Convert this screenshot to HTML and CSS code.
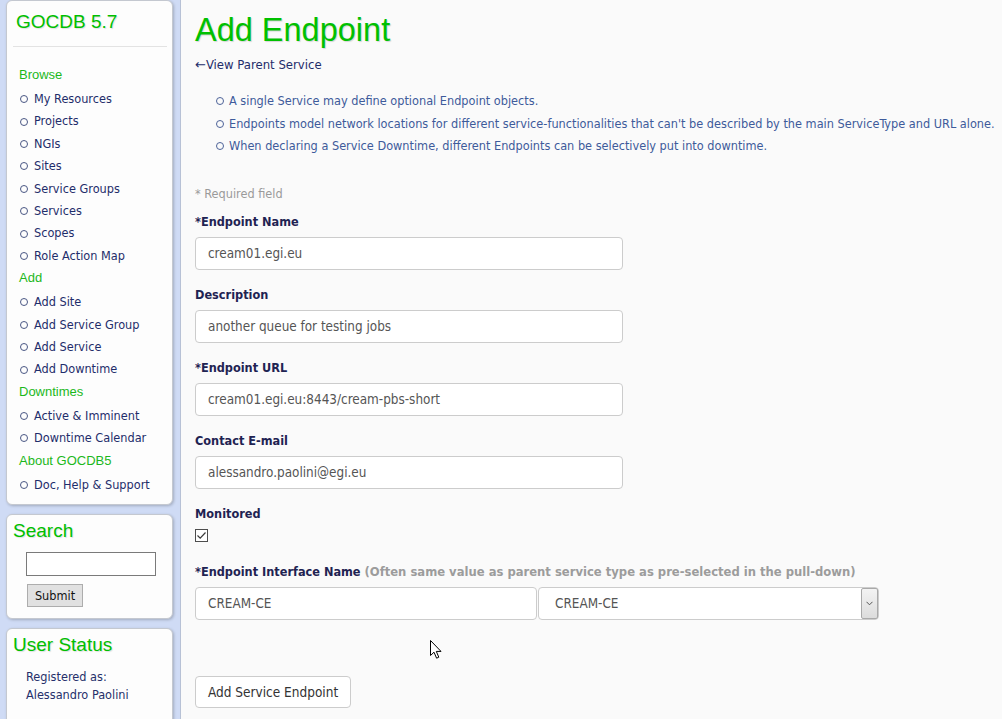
FILE: index.html
```html
<!DOCTYPE html>
<html lang="en">
<head>
<meta charset="utf-8">
<title>GOCDB - Add Endpoint</title>
<link rel="stylesheet" href="styles.css">
</head>
<body>
<div class="page">
  <aside class="sidebar">
    <nav class="box menu-box">
      <h2 class="brand">GOCDB 5.7</h2>
      <hr class="rule">
      <div class="menu-head first">Browse</div>
      <ul class="menu">
        <li><a href="#">My Resources</a></li>
        <li><a href="#">Projects</a></li>
        <li><a href="#">NGIs</a></li>
        <li><a href="#">Sites</a></li>
        <li><a href="#">Service Groups</a></li>
        <li><a href="#">Services</a></li>
        <li><a href="#">Scopes</a></li>
        <li><a href="#">Role Action Map</a></li>
      </ul>
      <div class="menu-head">Add</div>
      <ul class="menu">
        <li><a href="#">Add Site</a></li>
        <li><a href="#">Add Service Group</a></li>
        <li><a href="#">Add Service</a></li>
        <li><a href="#">Add Downtime</a></li>
      </ul>
      <div class="menu-head">Downtimes</div>
      <ul class="menu">
        <li><a href="#">Active &amp; Imminent</a></li>
        <li><a href="#">Downtime Calendar</a></li>
      </ul>
      <div class="menu-head">About GOCDB5</div>
      <ul class="menu">
        <li><a href="#">Doc, Help &amp; Support</a></li>
      </ul>
    </nav>
    <div class="box search-box">
      <h3 class="box-title">Search</h3>
      <form class="search-form">
        <input type="text" class="search-input">
        <button type="button" class="submit">Submit</button>
      </form>
    </div>
    <div class="box status-box">
      <h3 class="box-title">User Status</h3>
      <p class="status">Registered as:<br>Alessandro Paolini</p>
    </div>
  </aside>

  <main class="main">
    <h1 class="title">Add Endpoint</h1>
    <a class="back" href="#"><span class="arrow">&larr;</span>View Parent Service</a>
    <ul class="notes">
      <li>A single Service may define optional Endpoint objects.</li>
      <li>Endpoints model network locations for different service-functionalities that can't be described by the main ServiceType and URL alone.</li>
      <li>When declaring a Service Downtime, different Endpoints can be selectively put into downtime.</li>
    </ul>
    <div class="required">* Required field</div>
    <form class="form">
      <div class="field first">
        <label class="lbl">*Endpoint Name</label>
        <input class="text" type="text" value="cream01.egi.eu">
      </div>
      <div class="field">
        <label class="lbl">Description</label>
        <input class="text" type="text" value="another queue for testing jobs">
      </div>
      <div class="field">
        <label class="lbl">*Endpoint URL</label>
        <input class="text" type="text" value="cream01.egi.eu:8443/cream-pbs-short">
      </div>
      <div class="field">
        <label class="lbl">Contact E-mail</label>
        <input class="text" type="text" value="alessandro.paolini@egi.eu">
      </div>
      <div class="field">
        <label class="lbl">Monitored</label>
        <span class="checkbox"><svg width="11" height="11" viewBox="0 0 11 11"><path d="M1.5 5.5 L4.2 8.2 L9.5 2.5" fill="none" stroke="#3a3a3a" stroke-width="1.2"/></svg></span>
      </div>
      <div class="field iface">
        <label class="lbl">*Endpoint Interface Name <span class="hint">(Often same value as parent service type as pre-selected in the pull-down)</span></label>
        <div class="iface-row">
          <input class="text narrow" type="text" value="CREAM-CE">
          <div class="select">
            <span class="select-val">CREAM-CE</span>
            <span class="select-arrow"><svg width="7" height="5" viewBox="0 0 7 5"><path d="M0.5 0.8 L3.5 3.8 L6.5 0.8" fill="none" stroke="#555" stroke-width="1"/></svg></span>
          </div>
        </div>
      </div>
      <button type="button" class="add-btn">Add Service Endpoint</button>
    </form>
  </main>
</div>
<svg class="cursor" width="13" height="20" viewBox="0 0 13 20"><path d="M0.5 0.5 L0.5 15.5 L4 12.2 L6.6 18.2 L8.8 17.2 L6.3 11.4 L11 11.4 Z" fill="#fff" stroke="#000" stroke-width="1" stroke-linejoin="round"/></svg>
</body>
</html>
```

FILE: styles.css
```css
* { box-sizing: border-box; }
html, body { margin: 0; height: 100%; }
body {
  background: #cfdbf5;
  font-family: "DejaVu Sans Condensed", "DejaVu Sans", sans-serif;
  font-stretch: condensed;
  font-size: 12.6px;
  color: #1f2d6b;
  overflow: hidden;
}
a { color: inherit; text-decoration: none; }

.page { display: flex; align-items: stretch; min-height: 100vh; }

/* Sidebar */
.sidebar {
  width: 167px;
  margin-left: 6px;
  flex-shrink: 0;
  display: flex;
  flex-direction: column;
  gap: 9px;
}
.box {
  background: #fdfdfd;
  border: 1px solid #c4c8d0;
  border-radius: 6px;
  box-shadow: 1px 1px 3px rgba(0, 0, 0, 0.22);
}
.menu-box { padding: 10px 0 8px 0; }
.brand {
  margin: 0;
  padding-left: 9px;
  font: normal 19px/22px "Liberation Sans", Arial, sans-serif;
  color: #00bf00;
  text-shadow: 1px 1px 1px rgba(0, 0, 0, 0.12);
}
.rule {
  margin: 13px 5px 0 6px;
  border: 0;
  border-top: 1px solid #e3e3e3;
  height: 0;
}
.menu-head {
  font: 13px/22px "Liberation Sans", Arial, sans-serif;
  color: #1cb81c;
  padding-left: 12px;
  margin-bottom: 2px;
}
.menu-head.first { margin-top: 17px; }
.menu { list-style: none; margin: 0; padding: 0; }
.menu li {
  display: flex;
  align-items: center;
  line-height: 22.4px;
  color: #1f2d6b;
}
.menu li::before {
  content: "";
  width: 6px;
  height: 6px;
  border: 1px solid #4a5784;
  border-radius: 50%;
  margin-left: 13px;
  margin-right: 6px;
  flex-shrink: 0;
}

.box-title {
  margin: 0;
  padding-left: 6px;
  font: normal 19px/22px "Liberation Sans", Arial, sans-serif;
  color: #00bf00;
  text-shadow: 1px 1px 1px rgba(0, 0, 0, 0.12);
}
.search-box { padding: 5px 0 11px 0; }
.search-form { margin: 10px 0 0 19px; }
.search-input {
  display: block;
  width: 130px;
  height: 24px;
  border: 1px solid #7a7a7a;
  background: #fff;
  margin: 0;
}
.submit {
  display: block;
  margin: 8px 0 0 1px;
  width: 56px;
  height: 23px;
  padding: 0;
  background: #e1e1e1;
  border: 1px solid #adadad;
  border-radius: 0;
  font: inherit;
  color: #111;
}
.status-box { padding: 5px 0 40px 0; }
.status {
  margin: 12px 0 0 19px;
  line-height: 18px;
  color: #26306b;
}

/* Main */
.main {
  flex: 1;
  margin-left: 7px;
  border-left: 1px solid #b7c1d5;
  background: #fafafa;
  padding: 12px 0 0 14px;
}
.title {
  margin: 0;
  font: normal 32.5px/36px "Liberation Sans", Arial, sans-serif;
  color: #00c000;
  text-shadow: 1px 1px 1px rgba(0, 0, 0, 0.15);
}
.back {
  display: block;
  margin-top: 8px;
  line-height: 18px;
  font-size: 13px;
  color: #1f2d6b;
}
.back .arrow { font-family: "DejaVu Sans", sans-serif; font-stretch: normal; font-size: 13px; }
.notes {
  list-style: none;
  margin: 16px 0 0 0;
  padding: 0;
  color: #3e5b9b;
}
.notes li {
  display: flex;
  align-items: center;
  line-height: 22.5px;
  white-space: nowrap;
}
.notes li::before {
  content: "";
  width: 6px;
  height: 6px;
  border: 1px solid #4d6399;
  border-radius: 50%;
  margin-left: 21px;
  margin-right: 5px;
  flex-shrink: 0;
}
.required {
  margin-top: 27px;
  line-height: 18px;
  color: #9a9a9a;
}
.form { margin: 0; }
.field.first { margin-top: 10px; }
.field + .field { margin-top: 16px; }
.field.iface { margin-top: 21px; }
.lbl {
  display: block;
  font-weight: bold;
  line-height: 18px;
  margin-bottom: 6px;
  color: #1f2352;
}
.hint { color: #9c9c9c; font-size: 12.9px; }
.text {
  display: block;
  width: 428px;
  height: 33px;
  margin: 0;
  border: 1px solid #ccc;
  border-radius: 4px;
  padding: 0 12px;
  background: #fff;
  font: inherit;
  font-size: 13.4px;
  color: #555;
}
.checkbox {
  display: flex;
  align-items: center;
  justify-content: center;
  width: 13px;
  height: 13px;
  margin-top: 1px;
  border: 1px solid #4d4d4d;
  background: #fff;
}
.iface-row { display: flex; gap: 1px; }
.text.narrow { width: 342px; height: 33px; }
.select {
  width: 341px;
  height: 33px;
  display: flex;
  align-items: center;
  border: 1px solid #ccc;
  border-radius: 4px;
  background: #fff;
  padding-left: 16px;
  font-size: 13.4px;
  color: #555;
}
.select-val { flex: 1; }
.select-arrow {
  display: flex;
  align-items: center;
  justify-content: center;
  width: 17px;
  height: 31px;
  border: 1px solid #a9a9a9;
  border-radius: 2px;
  background: linear-gradient(#f3f3f3, #dcdcdc);
}
.add-btn {
  display: block;
  margin-top: 56px;
  height: 32px;
  padding: 0 12px;
  border: 1px solid #ccc;
  border-radius: 4px;
  background: #fff;
  font: inherit;
  font-size: 13.5px;
  color: #333;
}
.cursor {
  position: absolute;
  left: 430px;
  top: 640px;
}
```
